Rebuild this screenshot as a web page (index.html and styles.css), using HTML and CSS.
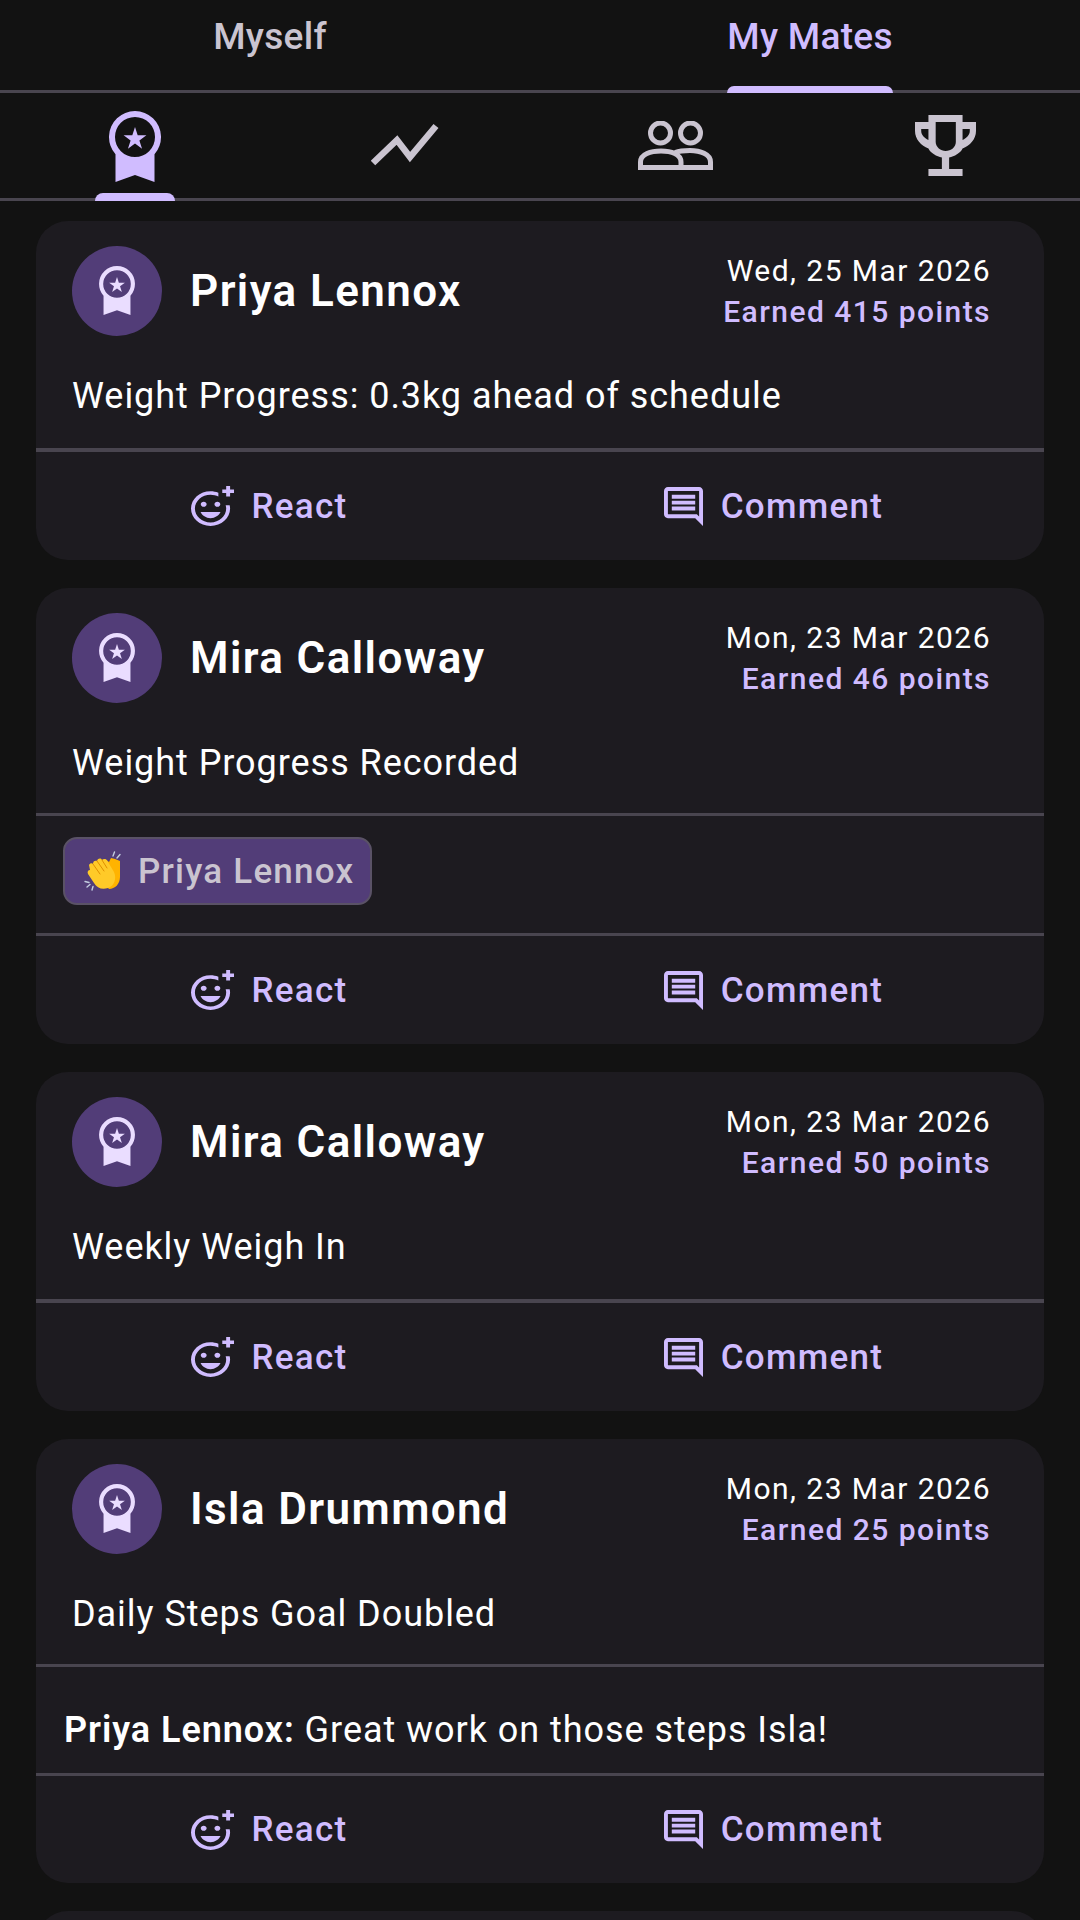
FILE: index.html
```html
<!DOCTYPE html>
<html lang="en">
<head>
    <meta charset="UTF-8">
    <meta name="viewport" content="width=device-width, initial-scale=1.0">
    <title>My Mates</title>
    <link rel="stylesheet" href="styles.css">
</head>
<body>
    <svg class="sprites" width="0" height="0">
        <symbol id="i-medal" viewBox="4 0 52 71">
            <path fill="currentColor" fill-rule="evenodd" d="M10.5 43.2A26 26 0 1 1 49.5 43.2V71L30 64L10.5 71ZM30 6A20 20 0 1 0 30 46A20 20 0 1 0 30 6ZM30 16L32.7 24.3L41.4 24.3L34.4 29.4L37.05 37.7L30 32.6L22.95 37.7L25.6 29.4L18.6 24.3L27.3 24.3Z"/>
        </symbol>
        <symbol id="i-react" viewBox="2 -1 22 23" preserveAspectRatio="none">
            <path fill="currentColor" d="M7 9.5C7 8.67 7.67 8 8.5 8s1.5.67 1.5 1.5S9.33 11 8.5 11 7 10.33 7 9.5zm5 8c2.33 0 4.31-1.46 5.11-3.5H6.89c.8 2.04 2.78 3.5 5.11 3.5zm3.5-6.5c.83 0 1.5-.67 1.5-1.5S16.33 8 15.5 8 14 8.67 14 9.5s.67 1.5 1.5 1.5zM22 1h2v2h-2v2h-2V3h-2V1h2v-2h2v2zm-2 11c0 4.42-3.58 8-8 8s-8-3.58-8-8 3.58-8 8-8c1.46 0 2.82.4 4 1.08V2.84C14.77 2.3 13.42 2 11.99 2 6.47 2 2 6.48 2 12s4.47 10 9.99 10C17.52 22 22 17.52 22 12c0-.69-.07-1.36-.21-2h-2.05c.17.64.26 1.31.26 2z"/>
        </symbol>
        <symbol id="i-comment" viewBox="2 2 20 20">
            <path fill="currentColor" d="M20 17.17L18.83 16H4V4h16v13.17zM20 2H4c-1.1 0-2 .9-2 2v12c0 1.1.9 2 2 2h14l4 4V4c0-1.1-.9-2-2-2zM6 12h12v2H6zm0-3h12v2H6zm0-3h12v2H6z"/>
        </symbol>
    </svg>

    <nav class="tabs">
        <div class="tab">Myself</div>
        <div class="tab active"><span class="tab-label">My Mates</span></div>
    </nav>

    <nav class="subtabs">
        <div class="subtab active">
            <svg class="icon-medal"><use href="#i-medal"/></svg>
        </div>
        <div class="subtab">
            <svg class="icon-chart" viewBox="0 0 68 46">
                <path fill="none" stroke="currentColor" stroke-width="6.5" d="M2 41L26 18L39 35L65 4"/>
            </svg>
        </div>
        <div class="subtab">
            <svg class="icon-group" viewBox="0 0 75 50">
                <g fill="none" stroke="currentColor" stroke-width="5">
                    <circle cx="22.500" cy="12" r="10"/>
                    <circle cx="52.500" cy="12" r="10"/>
                    <path d="M2.500 46.500V41C2.500 33 13 30 23 30C33 30 43 33 43 41V46.500Z"/>
                    <path d="M37 31.500C41 30 47 29.500 52 29.500C62 29.500 72.500 33 72.500 41V46.500H43"/>
                </g>
            </svg>
        </div>
        <div class="subtab">
            <svg class="icon-trophy" viewBox="0 0 59 61" preserveAspectRatio="none">
                <path fill="currentColor" fill-rule="evenodd" d="M13 0H46V7H59V16C59 24 53 31 46 33.500C44 38 38 41.500 33 42.500V54H46V61H13V54H26V42.500C21 41.500 15 38 13 33.500C6 31 0 24 0 16V7H13ZM20 7V27C20 32 25 36 29.500 36C35 36 39.500 32 39.500 27V7ZM6 14V16C6 20 9 23 13 25V14ZM53 14H46V25C50 23 53 20 53 16Z"/>
            </svg>
        </div>
    </nav>

    <main class="feed">
        <article class="card">
            <div class="card-main thick">
                <header class="card-head">
                    <div class="avatar"><svg class="icon-avatar"><use href="#i-medal"/></svg></div>
                    <div class="name">Priya Lennox</div>
                    <div class="meta">
                        <div class="date">Wed, 25 Mar 2026</div>
                        <div class="points">Earned 415 points</div>
                    </div>
                </header>
                <p class="summary">Weight Progress: 0.3kg ahead of schedule</p>
            </div>
            <div class="actions">
                <div class="action"><svg class="icon-react"><use href="#i-react"/></svg>React</div>
                <div class="action"><svg class="icon-comment"><use href="#i-comment"/></svg>Comment</div>
            </div>
        </article>

        <article class="card">
            <div class="card-main">
                <header class="card-head">
                    <div class="avatar"><svg class="icon-avatar"><use href="#i-medal"/></svg></div>
                    <div class="name">Mira Calloway</div>
                    <div class="meta">
                        <div class="date">Mon, 23 Mar 2026</div>
                        <div class="points">Earned 46 points</div>
                    </div>
                </header>
                <p class="summary">Weight Progress Recorded</p>
            </div>
            <div class="reactions">
                <div class="chip">
                    <svg class="icon-clap" viewBox="0 0 38 40">
                        <path fill="none" stroke="#c3cde0" stroke-width="1.400" stroke-linecap="round" d="M29 5L30.500 1M33 7L36 3.500M1 30.500L5 31.500M3 36L6 33.500M8 39L9 35.500"/>
                        <path fill="#ffb300" d="M21 8L25 11L27 7L31 8L36 10L36 26C36 33 31 38 25 38L18 30Z"/>
                        <path fill="#ffca28" d="M5 14C6 12 8 12 9 13C9 10 11 9 13 10C14 7 17 7 18 9C20 7 23 8 24 11L30 21C33 28 30 35 24 37C18 39 13 37 10 32L4 23C3 21 4 19 6 19Z"/>
                        <path fill="none" stroke="#e08f00" stroke-width="1" stroke-linecap="round" d="M9 13L16 23M13 10L20 20M18 9L23 17"/>
                    </svg>
                    Priya Lennox
                </div>
            </div>
            <div class="actions">
                <div class="action"><svg class="icon-react"><use href="#i-react"/></svg>React</div>
                <div class="action"><svg class="icon-comment"><use href="#i-comment"/></svg>Comment</div>
            </div>
        </article>

        <article class="card">
            <div class="card-main thick">
                <header class="card-head">
                    <div class="avatar"><svg class="icon-avatar"><use href="#i-medal"/></svg></div>
                    <div class="name">Mira Calloway</div>
                    <div class="meta">
                        <div class="date">Mon, 23 Mar 2026</div>
                        <div class="points">Earned 50 points</div>
                    </div>
                </header>
                <p class="summary">Weekly Weigh In</p>
            </div>
            <div class="actions">
                <div class="action"><svg class="icon-react"><use href="#i-react"/></svg>React</div>
                <div class="action"><svg class="icon-comment"><use href="#i-comment"/></svg>Comment</div>
            </div>
        </article>

        <article class="card">
            <div class="card-main">
                <header class="card-head">
                    <div class="avatar"><svg class="icon-avatar"><use href="#i-medal"/></svg></div>
                    <div class="name">Isla Drummond</div>
                    <div class="meta">
                        <div class="date">Mon, 23 Mar 2026</div>
                        <div class="points">Earned 25 points</div>
                    </div>
                </header>
                <p class="summary">Daily Steps Goal Doubled</p>
            </div>
            <div class="comments">
                <p class="comment"><strong>Priya Lennox:</strong> Great work on those steps Isla!</p>
            </div>
            <div class="actions">
                <div class="action"><svg class="icon-react"><use href="#i-react"/></svg>React</div>
                <div class="action"><svg class="icon-comment"><use href="#i-comment"/></svg>Comment</div>
            </div>
        </article>

        <article class="card"></article>
    </main>
</body>
</html>
```

FILE: styles.css
```css
* {
    margin: 0;
    padding: 0;
    box-sizing: border-box;
}

body {
    height: 1920px;
    overflow: hidden;
    background: #121212;
    font-family: 'Roboto', sans-serif;
    color: #fff;
}

.sprites {
    position: absolute;
}

svg {
    display: block;
    flex-shrink: 0;
}

/* top tabs */
.tabs {
    display: flex;
    height: 93px;
    border-bottom: 3px solid #49454f;
}

.tab {
    flex: 1;
    display: flex;
    justify-content: center;
    padding-top: 16px;
    font-size: 37px;
    font-weight: 490;
    letter-spacing: 0.300px;
    line-height: 42px;
    color: #cac4d0;
}

.tab.active {
    color: #d0bcff;
}

.tab-label {
    position: relative;
    height: 77px;
}

.tab-label::after {
    content: '';
    position: absolute;
    left: 0;
    right: 0;
    bottom: 0;
    height: 7px;
    background: #d0bcff;
    border-radius: 8px 8px 0 0;
}

/* icon tabs */
.subtabs {
    display: flex;
    height: 108px;
    border-bottom: 3px solid #49454f;
}

.subtab {
    position: relative;
    flex: 1;
    display: flex;
    justify-content: center;
    align-items: flex-start;
    color: #cac4d0;
}

.subtab.active {
    color: #d0bcff;
}

.subtab.active::after {
    content: '';
    position: absolute;
    left: 95px;
    bottom: -3px;
    width: 80px;
    height: 8px;
    background: #d0bcff;
    border-radius: 8px 8px 0 0;
}

.icon-medal {
    width: 52px;
    height: 71px;
    margin-top: 18px;
}

.icon-chart {
    width: 68px;
    height: 46px;
    margin-top: 29px;
}

.icon-group {
    width: 75px;
    height: 50px;
    margin-top: 28px;
}

.icon-trophy {
    width: 61px;
    height: 61px;
    margin-top: 22px;
}

/* feed */
.feed {
    display: flex;
    flex-direction: column;
    gap: 28px;
    padding: 20px 36px 0;
}

.card {
    flex-shrink: 0;
    background: #1d1b20;
    border-radius: 32px;
    overflow: hidden;
}

.card:last-child {
    height: 200px;
}

.card-main {
    height: 228px;
    padding: 24px 53px 0 36px;
    border-bottom: 3px solid #49454f;
}

.card-main.thick {
    height: 231px;
    border-bottom-width: 4px;
}

.card-head {
    display: flex;
    align-items: center;
    height: 91px;
}

.avatar {
    width: 90px;
    height: 90px;
    display: flex;
    justify-content: center;
    align-items: center;
    border-radius: 50%;
    background: #523d78;
    color: #eaddff;
}

.icon-avatar {
    width: 36px;
    height: 49px;
}

.name {
    flex: 1;
    margin-left: 28px;
    font-size: 44px;
    font-weight: 650;
    letter-spacing: 1.400px;
    line-height: 52px;
}

.meta {
    text-align: right;
    font-size: 30px;
    font-weight: 380;
    letter-spacing: 1.450px;
    line-height: 41px;
}

.points {
    font-weight: 490;
    color: #d0bcff;
}

.summary {
    margin-top: 38px;
    font-size: 36px;
    font-weight: 380;
    letter-spacing: 0.950px;
    line-height: 44px;
}

.reactions {
    height: 120px;
    padding: 21px 27px 0;
    border-bottom: 3px solid #49454f;
}

.chip {
    display: inline-flex;
    align-items: center;
    gap: 16px;
    height: 68px;
    padding: 0 16px 0 19px;
    border: 2px solid #5a5266;
    border-radius: 14px;
    background: #523d78;
    font-size: 35px;
    font-weight: 490;
    letter-spacing: 1.200px;
    color: #cac4d0;
}

.icon-clap {
    width: 38px;
    height: 40px;
}

.comments {
    display: flex;
    align-items: center;
    height: 109px;
    padding: 20px 28px 0;
    border-bottom: 3px solid #49454f;
}

.comment {
    font-size: 36px;
    font-weight: 380;
    letter-spacing: 0.950px;
}

.comment strong {
    font-weight: 650;
}

.actions {
    display: flex;
    height: 108px;
}

.comments + .actions {
    height: 107px;
}

.action {
    flex: 1;
    display: flex;
    justify-content: center;
    align-items: center;
    gap: 18px;
    padding-right: 37px;
    font-size: 35px;
    font-weight: 490;
    letter-spacing: 1.300px;
    color: #d0bcff;
}

.icon-react {
    width: 43px;
    height: 40px;
    margin-right: -1px;
}

.icon-comment {
    width: 39px;
    height: 39px;
}
```
